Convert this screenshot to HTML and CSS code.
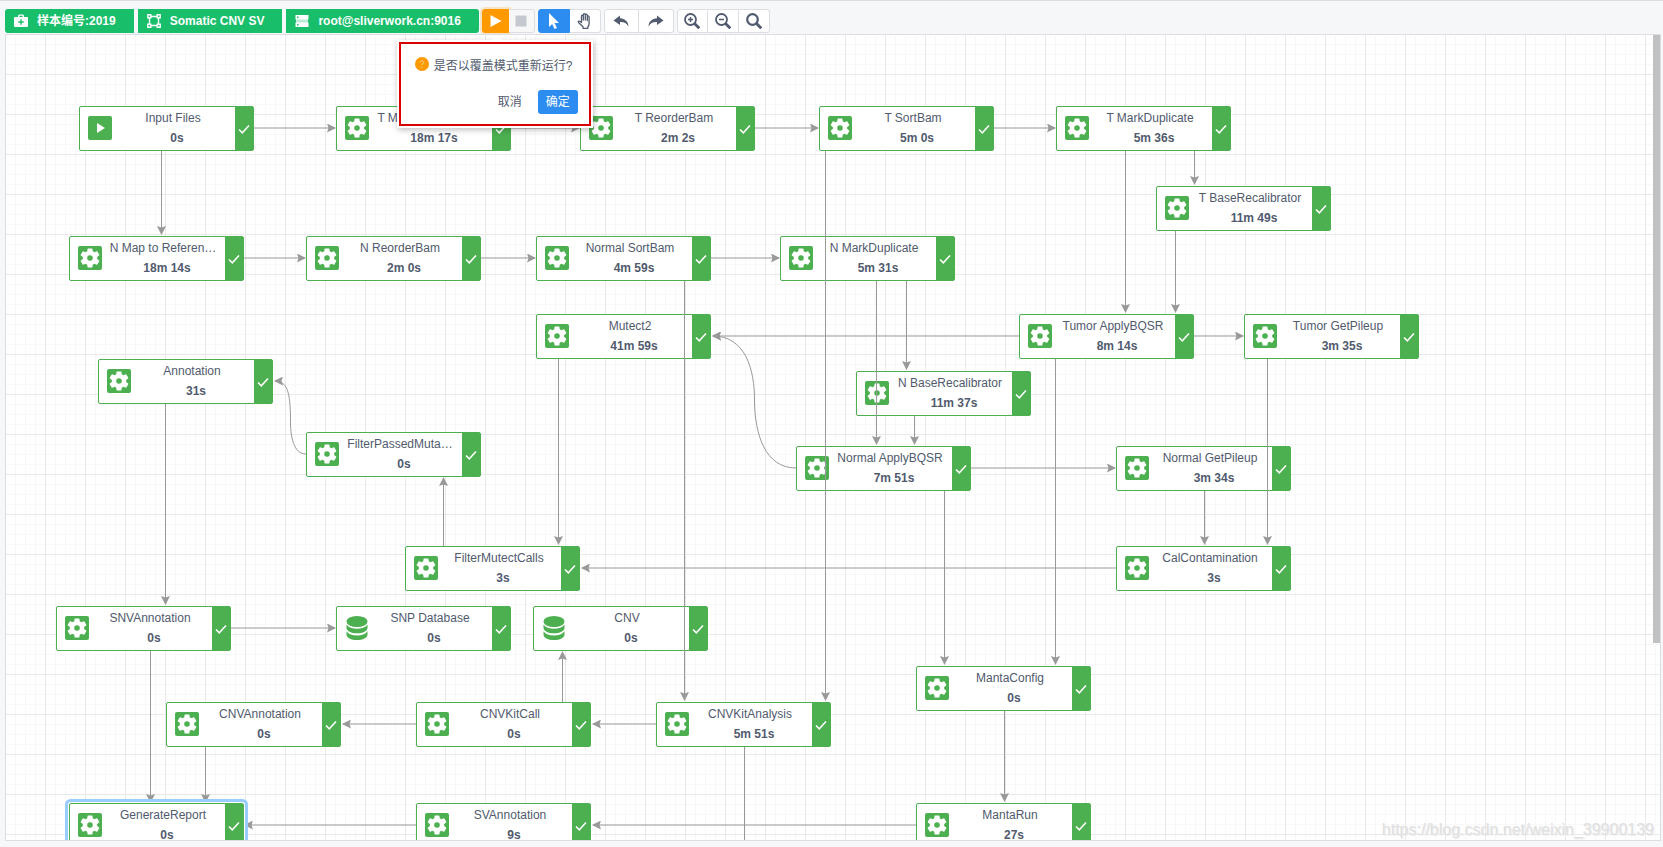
FILE: index.html
```html
<!DOCTYPE html>
<html lang="zh-CN">
<head>
<meta charset="utf-8">
<title>Somatic CNV SV</title>
<link rel="stylesheet" href="styles.css">
</head>
<body>
<svg class="defs" aria-hidden="true">
  <symbol id="gear" viewBox="0 0 24 24">
    <rect width="24" height="24" rx="2" fill="#4caf50"/>
    <path fill="#fff" d="M19.14 12.94c.04-.3.06-.61.06-.94s-.02-.64-.07-.94l2.03-1.58a.49.49 0 0 0 .12-.61l-1.92-3.32a.49.49 0 0 0-.59-.22l-2.39.96a7 7 0 0 0-1.62-.94l-.36-2.54a.48.48 0 0 0-.48-.41h-3.84a.48.48 0 0 0-.47.41l-.36 2.54c-.59.24-1.13.57-1.62.94l-2.39-.96a.48.48 0 0 0-.59.22L2.74 8.87a.48.48 0 0 0 .12.61l2.03 1.58c-.05.3-.09.63-.09.94s.02.64.07.94l-2.03 1.58a.49.49 0 0 0-.12.61l1.92 3.32c.12.22.37.29.59.22l2.39-.96c.5.38 1.03.7 1.62.94l.36 2.54c.05.24.24.41.48.41h3.84c.24 0 .44-.17.47-.41l.36-2.54a7 7 0 0 0 1.62-.94l2.39.96c.22.08.47 0 .59-.22l1.92-3.32a.48.48 0 0 0-.12-.61zM12 14.800a2.800 2.800 0 1 1 0-5.600 2.800 2.800 0 0 1 0 5.600z"/>
  </symbol>
  <symbol id="start" viewBox="0 0 24 24">
    <rect width="24" height="24" rx="2" fill="#4caf50"/>
    <path d="M9 7v10l8-5z" fill="#fff"/>
  </symbol>
  <symbol id="database" viewBox="0 0 24 24">
    <g fill="#4caf50">
      <ellipse cx="12" cy="5.500" rx="10.500" ry="5.500"/>
      <path d="M1.500 8.500c2 3 6 4.200 10.500 4.200s8.500-1.200 10.500-4.200v3.500c0 3-4.700 5.300-10.500 5.300S1.500 15 1.500 12z"/>
      <path d="M1.500 15.200c2 3 6 4.200 10.500 4.200s8.500-1.200 10.500-4.200v3.500c0 3-4.700 5.300-10.500 5.300S1.500 21.700 1.500 18.700z"/>
    </g>
  </symbol>
  <symbol id="check" viewBox="0 0 12 12">
    <path d="M1 6.500l3.300 3.300L11 2.500" fill="none" stroke="#fff" stroke-width="1.500"/>
  </symbol>
</svg>

<header class="toolbar">
  <div class="tags">
    <span class="tag tag-first">
      <svg class="tag-icon" viewBox="0 0 14 14"><path fill="#fff" fill-rule="evenodd" d="M4 3V1.500L5 .500h4l1 1V3h3q1 0 1 1v8q0 1-1 1H1q-1 0-1-1V4q0-1 1-1zm1.400 0h3.200V1.800H5.400zM6.300 5.300v2h-2v1.400h2v2h1.400v-2h2V7.300h-2v-2z"/></svg>
      样本编号:2019
    </span>
    <span class="tag">
      <svg class="tag-icon" viewBox="0 0 14 14"><g fill="none" stroke="#fff" stroke-width="1.400"><path d="M2.500 4v6M11.500 4v6M4 2.500h6M4 11.500h6"/><path d="M.8.800h3v3h-3zM10.200.800h3v3h-3zM.8 10.200h3v3h-3zM10.200 10.200h3v3h-3z"/></g></svg>
      Somatic CNV SV
    </span>
    <span class="tag tag-last">
      <svg class="tag-icon" viewBox="0 0 14 14"><path fill="#fff" fill-opacity=".7" d="M1 5h12v4H1z"/><path fill="#fff" fill-rule="evenodd" d="M.5 1h13v4.500H.5zM.5 8.500h13V13H.5zM2 2.500V4h1.500V2.500zM2 10v1.500h1.500V10z"/></svg>
      root@sliverwork.cn:9016
    </span>
  </div>

  <div class="group run-group">
    <button class="tool run" type="button" aria-label="运行"><svg viewBox="0 0 16 16"><path d="M3.500 2v12L14.500 8z" fill="#fff"/></svg></button>
    <button class="tool stop" type="button" aria-label="停止" disabled><svg viewBox="0 0 16 16"><path d="M2.500 2.500h11v11h-11z" fill="#c5c8ce"/></svg></button>
    <div class="popover" role="dialog" aria-labelledby="confirm-text">
      <p class="popover-message">
        <svg class="question" viewBox="0 0 14 14"><circle cx="7" cy="7" r="7" fill="#f90"/><path d="M5.300 5.400c0-2.400 3.400-2.300 3.400-.200 0 1.400-1.700 1.400-1.700 3M7 9.600v1.200" fill="none" stroke="#ffd591" stroke-width="1"/></svg>
        <span id="confirm-text">是否以覆盖模式重新运行?</span>
      </p>
      <div class="popover-actions">
        <button class="btn btn-text" type="button">取消</button>
        <button class="btn btn-primary" type="button">确定</button>
      </div>
    </div>
  </div>

  <div class="group">
    <button class="tool wide active" type="button" aria-label="选择"><svg viewBox="0 0 16 16"><path d="M3 0v14l3.200-3 2.300 5 2.400-1-2.300-5h4.400z" fill="#fff"/></svg></button>
    <button class="tool hand" type="button" aria-label="移动"><svg viewBox="0 0 16 16"><path d="M4.500 9.500V3.200q0-1 .9-1t.9 1V7 1.700q0-1 1-1t1 1V7 2.200q0-1 1-1t1 1V7.500 3.700q0-.9.900-.9t.9.900V10.500q0 2-1.200 3.200V15.300H6v-1.600L1.500 9.500q-.6-.9.200-1.300t1.600.4z" fill="#fff" stroke="#515a6e" stroke-width="1.300" stroke-linejoin="round"/></svg></button>
  </div>

  <div class="group">
    <button class="tool broad" type="button" aria-label="撤销"><svg viewBox="0 0 16 16"><path d="M7 2.500L.5 7.500 7 12V9c4-.2 6.500.8 8.500 4.500C15.200 8.500 12 5.700 7 5.300z" fill="#515a6e"/></svg></button>
    <button class="tool broad" type="button" aria-label="重做"><svg viewBox="0 0 16 16"><path d="M9 2.500l6.500 5L9 12V9C5 8.800 2.500 9.800.5 13.500.8 8.500 4 5.700 9 5.300z" fill="#515a6e"/></svg></button>
  </div>

  <div class="group">
    <button class="tool hand" type="button" aria-label="放大"><svg viewBox="0 0 16 16"><g fill="none" stroke="#515a6e"><circle cx="6.500" cy="6.500" r="5.500" stroke-width="1.800"/><path d="M10.500 10.500l4.800 4.800" stroke-width="2.800"/><path d="M6.500 4v5M4 6.500h5" stroke-width="1.500"/></g></svg></button>
    <button class="tool hand" type="button" aria-label="缩小"><svg viewBox="0 0 16 16"><g fill="none" stroke="#515a6e"><circle cx="6.500" cy="6.500" r="5.500" stroke-width="1.800"/><path d="M10.500 10.500l4.800 4.800" stroke-width="2.800"/><path d="M4 6.500h5" stroke-width="1.500"/></g></svg></button>
    <button class="tool hand" type="button" aria-label="重置缩放"><svg viewBox="0 0 16 16"><g fill="none" stroke="#515a6e"><circle cx="6.500" cy="6.500" r="5.300" stroke-width="2.200"/><path d="M10.500 10.500l4.800 4.800" stroke-width="3"/></g></svg></button>
  </div>
</header>

<main class="canvas" id="canvas">
  <svg class="edges" id="edges" aria-hidden="true">
    <defs>
      <marker id="arrow" markerUnits="userSpaceOnUse" markerWidth="9" markerHeight="9" refX="8" refY="4.500" orient="auto">
        <path d="M0 0l9 4.500-9 4.500 1.500-4.500z" fill="#999"/>
      </marker>
    </defs>
  </svg>
  <div class="scroll-thumb"></div>
  <div class="watermark">https://blog.csdn.net/weixin_39900139</div>
</main>
<script src="flow.js"></script>
</body>
</html>
```
FILE: styles.css
```css
* {
  box-sizing: border-box;
}

body {
  display: flex;
  flex-direction: column;
  height: 100vh;
  margin: 0;
  padding: 0 2px 6px 5px;
  border-top: 1px solid #dcdee2;
  background: #f5f7f9;
  color: #515a6e;
  font-family: "Liberation Sans", Arial, "Noto Sans CJK SC", sans-serif;
  font-size: 12px;
}

button {
  margin: 0;
  padding: 0;
  font: inherit;
  color: inherit;
}

.defs {
  position: absolute;
  width: 0;
  height: 0;
}

.toolbar {
  display: flex;
  gap: 3px;
  padding: 8px 0 1px;
}

.tags {
  display: flex;
  gap: 4px;
}

.tag {
  display: flex;
  align-items: center;
  gap: 9px;
  height: 24px;
  padding: 0 18px 0 9px;
  background: #19be6b;
  color: #fff;
  font-weight: 700;
  line-height: 22px;
  white-space: nowrap;
}

.tag-first {
  border-radius: 3px 0 0 3px;
}

.tag-last {
  border-radius: 0 3px 3px 0;
}

.tag-icon {
  width: 14px;
  height: 14px;
}

.group {
  position: relative;
  display: flex;
}

.tool {
  display: flex;
  align-items: center;
  justify-content: center;
  width: 26px;
  height: 24px;
  border: 1px solid #dcdee2;
  background: #fff;
}

.tool + .tool {
  border-left: 0;
}

.tool:first-of-type {
  border-radius: 3px 0 0 3px;
}

.tool:last-of-type {
  border-radius: 0 3px 3px 0;
}

.tool svg {
  width: 16px;
  height: 16px;
}

.wide {
  width: 32px;
}

.hand {
  width: 31px;
}

.broad {
  width: 35px;
}

.run {
  width: 27px;
  border-color: #f90;
  background: #f90;
  box-shadow: 0 0 0 2px rgba(255, 153, 0, 0.2);
}

.stop {
  background: #f7f7f7;
}

.active {
  border-color: #2d8cf0;
  background: #2d8cf0;
}

.popover {
  position: absolute;
  z-index: 10;
  top: 33px;
  left: -83px;
  width: 192px;
  padding: 10px 11px 10px 14px;
  border: 2px solid #d90000;
  background: #fff;
  box-shadow: 0 0 0 2px #fff, 1px 2px 6px 2px rgba(0, 0, 0, 0.25);
}

.popover::before {
  content: "";
  position: absolute;
  top: -9px;
  left: 90px;
  border: 6px solid transparent;
  border-top: 0;
  border-bottom-color: #fff;
}

.popover-message {
  display: flex;
  align-items: center;
  gap: 5px;
  height: 20px;
  margin: 0 0 16px;
  white-space: nowrap;
}

.question {
  width: 14px;
  height: 14px;
}

.popover-actions {
  display: flex;
  justify-content: flex-end;
  gap: 8px;
}

.btn {
  height: 24px;
  padding: 0 8px;
  border: 0;
  border-radius: 3px;
  background: transparent;
  line-height: 22px;
}

.btn-primary {
  background: #2d8cf0;
  color: #fff;
}

.canvas {
  position: relative;
  flex: 1;
  overflow: hidden;
  border: 1px solid #dcdee2;
  background-color: #fff;
  background-image:
    linear-gradient(#e9e9e9 1px, transparent 1px),
    linear-gradient(90deg, #e9e9e9 1px, transparent 1px),
    linear-gradient(#f8f8f8 1px, transparent 1px),
    linear-gradient(90deg, #f8f8f8 1px, transparent 1px);
  background-position: -1px -1px;
  background-size: 40px 40px, 40px 40px, 10px 10px, 10px 10px;
}

.edges {
  position: absolute;
  z-index: 2;
  inset: 0;
  width: 100%;
  height: 100%;
  fill: none;
  stroke: #999;
  pointer-events: none;
}

.edges marker path {
  stroke: none;
}

.node {
  position: absolute;
  z-index: 1;
  display: flex;
  width: 175px;
  height: 45px;
  border: 1px solid #4caf50;
  border-radius: 2px;
  background: #fff;
}

.node-icon {
  flex: none;
  width: 24px;
  height: 24px;
  margin: 9px 7px 0 8px;
}

.node-text {
  flex: 1;
  min-width: 0;
  padding-top: 1px;
  line-height: 20px;
  text-align: center;
}

.node-name {
  margin-right: 8px;
  white-space: nowrap;
}

.node-time {
  font-weight: 700;
}

.node-status {
  display: flex;
  flex: none;
  align-items: center;
  justify-content: center;
  width: 18px;
  background: #4caf50;
}

.node-status svg {
  width: 12px;
  height: 12px;
}

.selected {
  z-index: 3;
  box-shadow: 0 0 0 1px #fff, 0 0 0 4px #9cf;
}

.scroll-thumb {
  position: absolute;
  z-index: 4;
  top: 0;
  right: 0;
  width: 7px;
  height: 75.5%;
  background: #c1c1c1;
}

.watermark {
  position: absolute;
  z-index: 4;
  right: 6px;
  bottom: 0;
  color: #e0e0e0;
  font-size: 16px;
  line-height: 20px;
  text-shadow: 1px 1px 0 #eee;
}
```
FILE: flow.js
```js
// Steps of the workflow: name, duration, canvas x, canvas y, icon
const steps = [
  ["Input Files", "0s", 73, 71, "start"],
  ["T Map to Referen…", "18m 17s", 330, 71],
  ["T ReorderBam", "2m 2s", 574, 71],
  ["T SortBam", "5m 0s", 813, 71],
  ["T MarkDuplicate", "5m 36s", 1050, 71],
  ["T BaseRecalibrator", "11m 49s", 1150, 151],
  ["N Map to Referen…", "18m 14s", 63, 201],
  ["N ReorderBam", "2m 0s", 300, 201],
  ["Normal SortBam", "4m 59s", 530, 201],
  ["N MarkDuplicate", "5m 31s", 774, 201],
  ["Mutect2", "41m 59s", 530, 279],
  ["Tumor ApplyBQSR", "8m 14s", 1013, 279],
  ["Tumor GetPileup", "3m 35s", 1238, 279],
  ["Annotation", "31s", 92, 324],
  ["N BaseRecalibrator", "11m 37s", 850, 336],
  ["FilterPassedMuta…", "0s", 300, 397],
  ["Normal ApplyBQSR", "7m 51s", 790, 411],
  ["Normal GetPileup", "3m 34s", 1110, 411],
  ["FilterMutectCalls", "3s", 399, 511],
  ["CalContamination", "3s", 1110, 511],
  ["SNVAnnotation", "0s", 50, 571],
  ["SNP Database", "0s", 330, 571, "database"],
  ["CNV", "0s", 527, 571, "database"],
  ["MantaConfig", "0s", 910, 631],
  ["CNVAnnotation", "0s", 160, 667],
  ["CNVKitCall", "0s", 410, 667],
  ["CNVKitAnalysis", "5m 51s", 650, 667],
  ["GenerateReport", "0s", 63, 768, "gear", true],
  ["SVAnnotation", "9s", 410, 768],
  ["MantaRun", "27s", 910, 768]
];

// Connections between steps, as path data on the same canvas
const links = [
  "M248 93H329", "M505 93H573", "M749 93H812", "M988 93H1049",
  "M238 223H299", "M475 223H529", "M705 223H773",
  "M1013 301H707", "M1188 301H1237", "M965 433H1109", "M1110 533H576",
  "M225 593H329", "M410 689H337", "M650 689H587", "M410 790H239", "M910 790H587",
  "M155.5 116V199", "M819.5 116V665", "M1119.5 116V277", "M1188.5 116V149",
  "M1169.5 196V277", "M678.5 246V665", "M870.5 246V409", "M900.5 246V334",
  "M552.5 324V509", "M1049.5 324V629", "M1261.5 324V509",
  "M159.5 369V569", "M908.5 381V409", "M437.5 511V443",
  "M938.5 456V629", "M1198.5 456V509", "M144.5 616V767",
  "M556.5 667V617", "M998.5 676V766", "M199.5 712V767",
  "M790 433C759 433 749 399 748.500 367C749 334 739 301 707 301",
  "M300 419C288 419 284 403 284.500 382.500C284 359 282 346 269 346"
];

const canvas = document.getElementById("canvas");
const edges = document.getElementById("edges");
const svgNs = "http://www.w3.org/2000/svg";

for (const d of links) {
  const path = document.createElementNS(svgNs, "path");
  path.setAttribute("d", d);
  path.setAttribute("marker-end", "url(#arrow)");
  edges.append(path);
}

// CNVKitAnalysis continues to a step further down the canvas
const tail = document.createElementNS(svgNs, "path");
tail.setAttribute("d", "M738.5 712V1000");
edges.append(tail);

for (const [name, time, x, y, icon = "gear", selected = false] of steps) {
  const node = document.createElement("div");
  node.className = selected ? "node selected" : "node";
  node.style.left = x + "px";
  node.style.top = y + "px";
  node.innerHTML =
    `<svg class="node-icon"><use href="#${icon}"/></svg>
     <div class="node-text"><div class="node-name">${name}</div><div class="node-time">${time}</div></div>
     <div class="node-status"><svg><use href="#check"/></svg></div>`;
  canvas.append(node);
}
```
